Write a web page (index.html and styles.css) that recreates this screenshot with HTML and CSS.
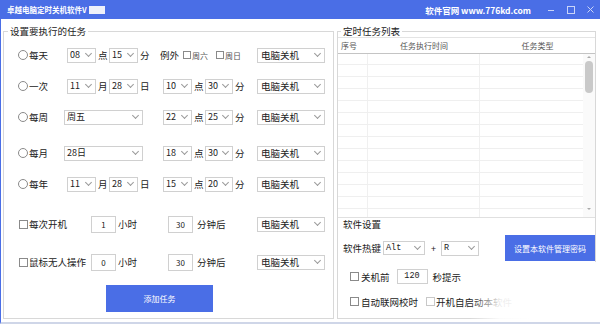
FILE: index.html
```html
<!DOCTYPE html>
<html lang="zh-CN">
<head>
<meta charset="utf-8">
<title>卓越电脑定时关机软件</title>
<link rel="stylesheet" href="styles.css">
</head>
<body>
<div class="window">
  <header class="titlebar">
    <span class="title">卓越电脑定时关机软件V<span class="redact"></span></span>
    <span class="site">软件官网 www.776kd.com</span>
    <div class="ctrls">
      <span class="ctrl"><svg width="20" height="19" viewBox="0 0 20 19"><path d="M7 10.5h6"/></svg></span>
      <span class="ctrl"><svg width="20" height="19" viewBox="0 0 20 19"><rect x="6.5" y="6.5" width="7" height="7"/></svg></span>
      <span class="ctrl last"><svg width="19" height="19" viewBox="0 0 19 19"><path d="M6.5 6.5l6 6M12.5 6.5l-6 6"/></svg></span>
    </div>
  </header>

  <main class="main">
    <fieldset class="group tasks">
      <legend>设置要执行的任务</legend>
      <div class="task-body">
        <div class="row r1">
          <label class="c-lab"><span class="radio"></span>每天</label>
          <div class="c-date">
            <div class="sel w29"><span>08</span></div><span class="unit">点</span>
            <div class="sel w29"><span>15</span></div><span class="unit">分</span>
          </div>
          <div class="c-time except">
            <span class="ex">例外</span>
            <span class="cb sm"></span><span class="small">周六</span>
            <span class="cb sm gap"></span><span class="small">周日</span>
          </div>
          <div class="sel act"><span>电脑关机</span></div>
        </div>

        <div class="row r2">
          <label class="c-lab"><span class="radio"></span>一次</label>
          <div class="c-date">
            <div class="sel w29"><span>11</span></div><span class="unit">月</span>
            <div class="sel w29"><span>28</span></div><span class="unit">日</span>
          </div>
          <div class="c-time">
            <div class="sel w29"><span>10</span></div><span class="unit">点</span>
            <div class="sel w28"><span>30</span></div><span class="unit">分</span>
          </div>
          <div class="sel act"><span>电脑关机</span></div>
        </div>

        <div class="row r3">
          <label class="c-lab"><span class="radio"></span>每周</label>
          <div class="c-date full">
            <div class="sel w79"><span>周五</span></div>
          </div>
          <div class="c-time">
            <div class="sel w29"><span>22</span></div><span class="unit">点</span>
            <div class="sel w28"><span>25</span></div><span class="unit">分</span>
          </div>
          <div class="sel act"><span>电脑关机</span></div>
        </div>

        <div class="row r4">
          <label class="c-lab"><span class="radio"></span>每月</label>
          <div class="c-date full">
            <div class="sel w79"><span>28日</span></div>
          </div>
          <div class="c-time">
            <div class="sel w29"><span>18</span></div><span class="unit">点</span>
            <div class="sel w28"><span>30</span></div><span class="unit">分</span>
          </div>
          <div class="sel act"><span>电脑关机</span></div>
        </div>

        <div class="row r5">
          <label class="c-lab"><span class="radio"></span>每年</label>
          <div class="c-date">
            <div class="sel w29"><span>11</span></div><span class="unit">月</span>
            <div class="sel w29"><span>28</span></div><span class="unit">日</span>
          </div>
          <div class="c-time">
            <div class="sel w29"><span>15</span></div><span class="unit">点</span>
            <div class="sel w28"><span>20</span></div><span class="unit">分</span>
          </div>
          <div class="sel act"><span>电脑关机</span></div>
        </div>

        <div class="row r6">
          <label class="c-lab2"><span class="cb"></span>每次开机</label>
          <div class="inp">1</div><span class="unit-h">小时</span>
          <div class="inp">30</div><span class="unit-m">分钟后</span>
          <div class="sel act"><span>电脑关机</span></div>
        </div>

        <div class="row r7">
          <label class="c-lab2"><span class="cb"></span>鼠标无人操作</label>
          <div class="inp">0</div><span class="unit-h">小时</span>
          <div class="inp">30</div><span class="unit-m">分钟后</span>
          <div class="sel act"><span>电脑关机</span></div>
        </div>

        <button class="btn add">添加任务</button>
      </div>
    </fieldset>

    <fieldset class="group list">
      <legend>定时任务列表</legend>
      <div class="grid">
        <div class="grid-head">
          <span class="h1">序号</span>
          <span class="h2">任务执行时间</span>
          <span class="h3">任务类型</span>
        </div>
        <div class="grid-body">
          <div class="rows">
            <div class="gr"><span></span><span></span><span></span></div>
            <div class="gr"><span></span><span></span><span></span></div>
            <div class="gr"><span></span><span></span><span></span></div>
            <div class="gr"><span></span><span></span><span></span></div>
            <div class="gr"><span></span><span></span><span></span></div>
            <div class="gr"><span></span><span></span><span></span></div>
            <div class="gr"><span></span><span></span><span></span></div>
            <div class="gr"><span></span><span></span><span></span></div>
            <div class="gr"><span></span><span></span><span></span></div>
            <div class="gr"><span></span><span></span><span></span></div>
            <div class="gr"><span></span><span></span><span></span></div>
            <div class="gr"><span></span><span></span><span></span></div>
            <div class="gr"><span></span><span></span><span></span></div>
            <div class="gr last"><span></span><span></span><span></span></div>
          </div>
          <div class="scrollbar">
            <span class="arrow up"></span>
            <span class="thumb"></span>
            <span class="arrow down"></span>
          </div>
        </div>
      </div>

      <div class="settings">
        <div class="set-title">软件设置</div>
        <div class="set-row hot">
          <span>软件热键</span>
          <div class="sel mono w42"><span>Alt</span></div>
          <span class="plus">+</span>
          <div class="sel mono w38"><span>R</span></div>
          <button class="btn pwd">设置本软件管理密码</button>
        </div>
        <div class="set-row warn">
          <label class="chk"><span class="cb"></span>关机前</label>
          <div class="inp mono w31">120</div>
          <span class="sec">秒提示</span>
        </div>
        <div class="set-row opts">
          <label class="chk"><span class="cb"></span>自动联网校时</label>
          <label class="chk auto"><span class="cb"></span>开机自启动本软件</label>
        </div>
      </div>
    </fieldset>
  </main>
  <div class="fade"></div>
</div>
</body>
</html>
```

FILE: styles.css
```css
* { box-sizing: border-box; }
html, body { margin: 0; padding: 0; background: #fff; }
body {
  font-family: "Noto Sans CJK SC", "Liberation Sans", sans-serif;
  font-size: 9.5px;
  color: #222;
}

.window {
  position: relative;
  width: 600px;
  height: 324px;
  border-left: 1px solid #4a6ee6;
  border-bottom: 2px solid #cfd6e8;
  overflow: hidden;
  display: flex;
  flex-direction: column;
}

/* title bar */
.titlebar {
  flex: none;
  height: 19px;
  background: #4a6ee6;
  color: #fff;
  display: flex;
  align-items: center;
  padding-left: 6px;
}
.title {
  font-size: 7.5px;
  font-weight: bold;
  display: flex;
  align-items: center;
  line-height: 10px;
}
.redact {
  display: inline-block;
  width: 16px;
  height: 8px;
  margin-left: 2px;
  background: #eef0fa;
}
.site {
  margin-left: auto;
  margin-right: 10px;
  font-size: 8.5px;
  font-weight: bold;
  line-height: 10px;
}
.ctrls { display: flex; }
.ctrl { display: block; width: 20px; height: 19px; }
.ctrl.last { width: 19px; }
.ctrl svg { display: block; fill: none; stroke: #c9d4f8; stroke-width: 1; }

/* main */
.main {
  flex: 1;
  display: flex;
  padding: 6px 4px 3px 2px;
  gap: 3px;
}
.group {
  margin: 0;
  padding: 0;
  min-width: 0;
  border: 1px solid #d8d8d8;
}
.group legend {
  font-size: 9.5px;
  line-height: 12px;
  padding: 0 2px;
  color: #222;
}

/* tasks */
.tasks { width: 331px; }
.tasks legend { margin-left: 4px; }
.task-body {
  padding: 3px 0 0 14px;
  display: flex;
  flex-direction: column;
}
.row {
  height: 30px;
  display: flex;
  align-items: center;
}
.r2, .r3, .r5 { margin-top: 1px; }
.r4 { margin-top: 6px; }
.r6 { margin-top: 10px; }
.r7 { margin-top: 8px; }

.c-lab { width: 46px; display: flex; align-items: center; }
.radio {
  width: 10px;
  height: 10px;
  border: 1px solid #8a8a8a;
  border-radius: 50%;
  margin-right: 1px;
  background: #fff;
}
.c-date { width: 99px; display: flex; align-items: center; padding-left: 3px; }
.c-date.full { padding-left: 0; }
.c-time { width: 94px; display: flex; align-items: center; }
.unit { width: 9px; margin: 0 2px; line-height: 12px; }

.except .ex { margin-left: -3px; }
.cb {
  display: inline-block;
  width: 9px;
  height: 9px;
  border: 1px solid #8a8a8a;
  background: #fff;
  flex: none;
}
.cb.sm { width: 8px; height: 8px; margin-left: 4px; margin-right: 1px; }
.cb.sm.gap { margin-left: 8px; }
.small { font-size: 8px; color: #555; }

.sel {
  height: 15px;
  border: 1px solid #d0d0d0;
  background: #fff;
  display: flex;
  align-items: center;
  justify-content: space-between;
  padding: 0 4px 0 2px;
  font-size: 9px;
  line-height: 12px;
  flex: none;
}
.sel::after {
  content: "";
  width: 4px;
  height: 4px;
  border: solid #9a9a9a;
  border-width: 0 1px 1px 0;
  transform: rotate(45deg);
  margin-top: -3px;
}
.w28 { width: 28px; }
.w29 { width: 29px; }
.w38 { width: 38px; }
.w42 { width: 42px; }
.w79 { width: 79px; }
.act { width: 68px; font-size: 9.5px; padding-left: 3px; }

.c-lab2 { width: 73px; display: flex; align-items: center; }
.c-lab2 .cb { margin-left: 1px; margin-right: 1px; }
.inp {
  width: 25px;
  height: 17px;
  border: 1px solid #d0d0d0;
  text-align: center;
  font-size: 8px;
  line-height: 15px;
  flex: none;
}
.unit-h { width: 50px; margin-left: 2px; }
.unit-m { width: 60px; margin-left: 4px; }

.btn {
  border: 0;
  background: #4a6ee6;
  color: #fff;
  font-family: inherit;
  font-size: 8px;
  padding: 0;
  cursor: pointer;
}
.add {
  width: 107px;
  height: 27px;
  margin: 8px 0 0 88px;
}

/* list */
.list { width: 259px; display: flex; flex-direction: column; }
.list legend { margin-left: 3px; }
.grid { border-top: 1px solid #e4e4e4; }
.grid-head {
  height: 16px;
  border-bottom: 1px solid #c4c4c4;
  display: flex;
  align-items: center;
  font-size: 8px;
  color: #555;
  line-height: 10px;
}
.h1 { width: 30px; padding-left: 3px; }
.h2 { width: 112px; text-align: center; }
.h3 { flex: 1; text-align: center; }
.grid-body {
  height: 164px;
  display: flex;
  border-bottom: 1px solid #e0e0e0;
  overflow: hidden;
}
.rows { width: 245px; }
.gr {
  height: 12px;
  display: flex;
  border-bottom: 1px solid #efefef;
}
.gr:first-child { height: 11px; }
.gr span:nth-child(1) { width: 30px; border-right: 1px solid #f0f0f0; }
.gr span:nth-child(2) { width: 112px; border-right: 1px solid #f0f0f0; }
.scrollbar {
  width: 12px;
  display: flex;
  flex-direction: column;
  align-items: center;
  background: #fafafa;
}
.arrow {
  width: 0;
  height: 0;
  border-left: 2px solid transparent;
  border-right: 2px solid transparent;
}
.arrow.up { border-bottom: 2px solid #aaa; margin-top: 2px; }
.arrow.down { border-top: 2px solid #aaa; margin-top: auto; margin-bottom: 7px; }
.thumb {
  width: 8px;
  height: 32px;
  margin-top: 3px;
  border-radius: 4px;
  background: #c9c9c9;
}

/* settings */
.settings { padding-left: 5px; }
.set-title { line-height: 12px; }
.set-row { display: flex; align-items: center; }
.hot { height: 26px; margin-top: 5px; }
.hot .sel.w42 { margin-left: 2px; height: 14px; }
.plus { margin: 0 5px 0 6px; font-size: 9px; }
.mono { font-family: "Liberation Mono", monospace; font-size: 8.5px; }
.pwd { width: 90px; height: 26px; margin-left: auto; }
.warn { height: 15px; margin-top: 8px; padding-left: 7px; }
.chk { display: flex; align-items: center; }
.chk .cb { margin-right: 2px; }
.w31 { width: 31px; height: 15px; line-height: 13px; margin-left: 7px; }
.sec { margin-left: 5px; }
.opts { height: 15px; margin-top: 10px; padding-left: 7px; }
.auto { margin-left: 8px; }
.auto .cb { border-color: #c8c8c8; margin-right: 1px; }

.fade {
  position: absolute;
  right: 0;
  bottom: 0;
  width: 130px;
  height: 60px;
  background: linear-gradient(to right, rgba(255,255,255,0) 0, rgba(255,255,255,0.9) 30px, #fff 60px);
}
```
